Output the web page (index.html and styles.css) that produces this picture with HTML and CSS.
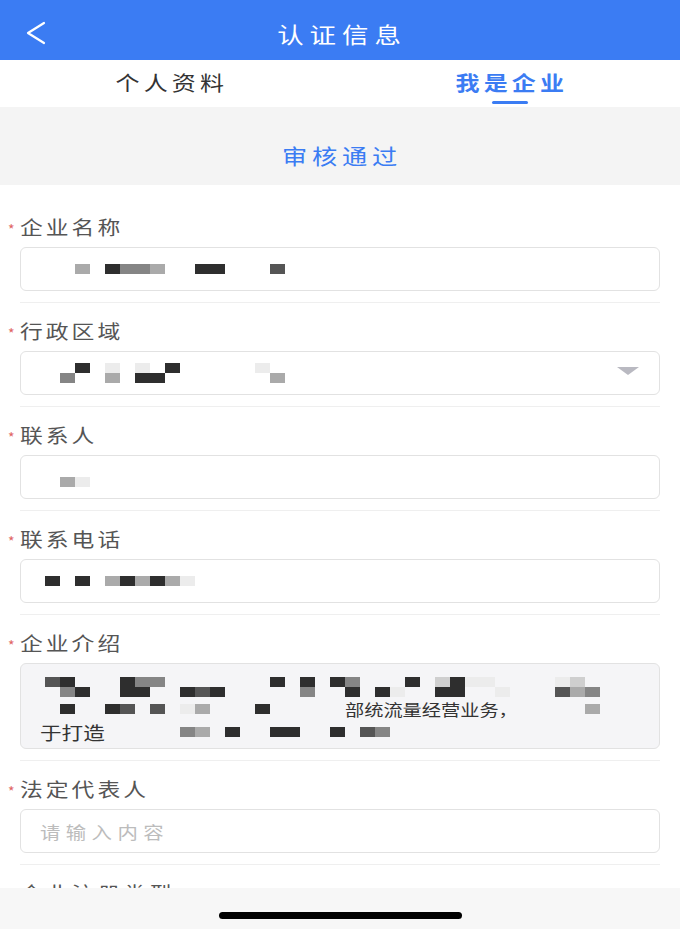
FILE: index.html
```html
<!DOCTYPE html>
<html lang="zh-CN">
<head>
    <meta charset="UTF-8">
    <meta name="viewport" content="width=device-width, initial-scale=1.0">
    <title>认证信息</title>
    <link rel="stylesheet" href="styles.css">
</head>
<body>
    <header class="nav-bar">
        <div class="nav-back">
            <svg width="22" height="24" viewBox="0 0 22 24"><polyline points="19,2 3,12 19,22" fill="none" stroke="#fff" stroke-width="2.2" stroke-linecap="round" stroke-linejoin="round"/></svg>
        </div>
        <div class="nav-title"><span class="wide">认证信息</span></div>
        <div></div>
    </header>

    <nav class="tabs">
        <div class="tab"><span class="wide">个人资料</span></div>
        <div class="tab active"><span class="wide">我是企业</span><span class="tab-line"></span></div>
    </nav>

    <div class="status"><span class="wide">审核通过</span></div>

    <form class="form">
        <div class="field">
            <div class="label"><span class="star">*</span><span class="wide">企业名称</span></div>
            <div class="input">
                <div class="mosaic"><i></i><i></i><i class="c3"></i><i></i><i class="c6"></i><i class="c4"></i><i class="c4"></i><i class="c3"></i><i></i><i></i><i class="c6"></i><i class="c6"></i><i></i><i></i><i></i><i class="c5"></i></div>
            </div>
        </div>

        <div class="field">
            <div class="label"><span class="star">*</span><span class="wide">行政区域</span></div>
            <div class="input select">
                <div>
                    <div class="mosaic"><i></i><i></i><i class="c6"></i><i></i><i class="c1"></i><i></i><i class="c1"></i><i></i><i class="c6"></i><i></i><i></i><i></i><i></i><i></i><i class="c1"></i></div>
                    <div class="mosaic"><i></i><i class="c4"></i><i></i><i></i><i class="c3"></i><i></i><i class="c6"></i><i class="c6"></i><i></i><i></i><i></i><i></i><i></i><i></i><i></i><i class="c3"></i></div>
                </div>
                <span class="caret"></span>
            </div>
        </div>

        <div class="field">
            <div class="label"><span class="star">*</span><span class="wide">联系人</span></div>
            <div class="input">
                <div class="mosaic low"><i></i><i class="c3"></i><i class="c1"></i></div>
            </div>
        </div>

        <div class="field">
            <div class="label"><span class="star">*</span><span class="wide">联系电话</span></div>
            <div class="input">
                <div class="mosaic"><i class="c6"></i><i></i><i class="c6"></i><i></i><i class="c3"></i><i class="c6"></i><i class="c3"></i><i class="c6"></i><i class="c3"></i><i class="c1"></i></div>
            </div>
        </div>

        <div class="field">
            <div class="label"><span class="star">*</span><span class="wide">企业介绍</span></div>
            <div class="textarea">
                <div class="mosaic"><i class="c5"></i><i class="c6"></i><i></i><i></i><i></i><i class="c6"></i><i class="c4"></i><i class="c4"></i><i></i><i></i><i></i><i></i><i></i><i></i><i></i><i class="c6"></i><i></i><i class="c6"></i><i></i><i class="c6"></i><i class="c4"></i><i></i><i></i><i></i><i class="c6"></i><i></i><i class="c2"></i><i class="c6"></i><i class="c1"></i><i class="c1"></i><i></i><i></i><i></i><i></i><i class="c1"></i><i class="c2"></i></div>
                <div class="mosaic"><i></i><i class="c4"></i><i class="c6"></i><i></i><i></i><i class="c6"></i><i class="c6"></i><i></i><i></i><i class="c6"></i><i class="c5"></i><i class="c6"></i><i></i><i></i><i></i><i></i><i></i><i class="c4"></i><i></i><i></i><i class="c6"></i><i></i><i class="c6"></i><i class="c1"></i><i></i><i></i><i class="c6"></i><i class="c6"></i><i></i><i></i><i class="c1"></i><i></i><i></i><i></i><i class="c5"></i><i class="c3"></i><i class="c4"></i></div>
                <div class="mosaic mid"><i></i><i class="c6"></i><i></i><i></i><i class="c6"></i><i class="c5"></i><i></i><i class="c5"></i><i></i><i class="c1"></i><i class="c3"></i><i></i><i></i><i></i><i class="c6"></i><i></i><i></i><i></i><i></i><i></i><span class="mid-text"><span class="wide">部统流量经营业务，</span></span><i></i><i></i><i class="c3"></i></div>
                <div class="text-row"><span class="intro-text"><span class="wide">于打造</span></span><i></i><i></i><i></i><i class="c4"></i><i class="c3"></i><i></i><i class="c6"></i><i></i><i></i><i class="c6"></i><i class="c6"></i><i></i><i></i><i class="c6"></i><i></i><i class="c5"></i><i class="c4"></i></div>
            </div>
        </div>

        <div class="field">
            <div class="label"><span class="star">*</span><span class="wide">法定代表人</span></div>
            <div class="input">
                <span class="placeholder"><span class="wide">请输入内容</span></span>
            </div>
        </div>

        <div class="field">
            <div class="label"><span class="star">*</span><span class="wide">企业注册类型</span></div>
            <div class="input"></div>
        </div>
    </form>

    <div class="home-bar">
        <span class="home-indicator"></span>
    </div>
</body>
</html>
```

FILE: styles.css
```css
body {
    margin: 0;
    font-family: "Noto Sans CJK SC", "Noto Sans", sans-serif;
    background-color: #fff;
    color: #333;
}
/* the screenshot is a little stretched sideways, so the glyphs are too */
.wide {
    display: inline-block;
    transform: scaleX(1.2);
    transform-origin: left center;
    white-space: nowrap;
}
.nav-bar {
    display: grid;
    grid-template-columns: 60px 1fr 60px;
    align-items: center;
    height: 60px;
    background-color: #3b7cf3;
}
.nav-back {
    display: flex;
    padding: 5px 0 0 25px;
}
.nav-title,
.tab,
.status {
    text-align: center;
}
.nav-title .wide,
.tab .wide,
.status .wide {
    transform-origin: center;
}
.nav-title {
    color: #fff;
    font-size: 22px;
    line-height: 28px;
    letter-spacing: 5px;
    padding: 6px 0 0 5px;
}
.tabs {
    display: flex;
    height: 47px;
}
.tab {
    flex: 1;
    display: flex;
    flex-direction: column;
    align-items: center;
    padding-top: 10px;
    font-size: 20px;
    line-height: 26px;
    letter-spacing: 3.5px;
    text-indent: 3.5px;
    color: #333;
}
.tab.active {
    color: #3b7cf3;
    font-weight: bold;
}
.tab-line {
    display: block;
    width: 36px;
    height: 3px;
    margin-top: 5px;
    border-radius: 2px;
    background-color: #3b7cf3;
}
.status {
    height: 78px;
    box-sizing: border-box;
    padding: 34px 0 0 4px;
    background-color: #f4f4f4;
    color: #3b7cf3;
    font-size: 21px;
    line-height: 28px;
    letter-spacing: 4px;
}
.form {
    padding-top: 14px;
}
.field {
    margin: 0 20px;
    padding: 13px 0 11px;
    border-bottom: 1px solid #efefef;
}
.label {
    display: flex;
    align-items: center;
    height: 28px;
    margin-bottom: 7px;
    font-size: 19px;
    letter-spacing: 2.5px;
    color: #555;
}
.star {
    width: 16px;
    margin-left: -16px;
    padding: 6px 0 0 4px;
    box-sizing: border-box;
    font-size: 14px;
    letter-spacing: 0;
    color: #e06464;
}
.input {
    display: flex;
    align-items: center;
    height: 44px;
    box-sizing: border-box;
    padding: 0 20px 0 24px;
    border: 1px solid #e2e2e2;
    border-radius: 6px;
    background-color: #fff;
}
.select {
    justify-content: space-between;
}
.caret {
    width: 0;
    height: 0;
    border-left: 11px solid transparent;
    border-right: 11px solid transparent;
    border-top: 8px solid #b9b9c1;
    margin-bottom: 4px;
}
.placeholder {
    margin-left: -5px;
    font-size: 17px;
    letter-spacing: 4.5px;
    color: #bcbcbc;
}
.mosaic,
.text-row {
    display: flex;
}
.mosaic i,
.text-row i {
    display: block;
    flex: none;
    width: 15px;
    height: 10px;
}
.mosaic.low {
    margin-top: 10px;
}
.mosaic .c1, .text-row .c1 { background-color: #ececec; }
.mosaic .c2, .text-row .c2 { background-color: #cfcfcf; }
.mosaic .c3, .text-row .c3 { background-color: #aaa; }
.mosaic .c4, .text-row .c4 { background-color: #858585; }
.mosaic .c5, .text-row .c5 { background-color: #555; }
.mosaic .c6, .text-row .c6 { background-color: #2e2e2e; }
.textarea {
    height: 86px;
    box-sizing: border-box;
    padding: 13px 10px 0 19px;
    border: 1px solid #e2e2e2;
    border-radius: 6px;
    background-color: #f5f5f7;
}
.textarea .mosaic {
    padding-left: 5px;
}
.mosaic.mid {
    align-items: center;
    height: 20px;
    margin-top: 2px;
}
.mid-text {
    width: 210px;
    flex: none;
    font-size: 16px;
    line-height: 20px;
    color: #333;
}
.text-row {
    align-items: center;
    height: 24px;
    margin-top: 1px;
}
.intro-text {
    width: 95px;
    flex: none;
    font-size: 18px;
    color: #333;
}
.home-bar {
    position: fixed;
    left: 0;
    right: 0;
    bottom: 0;
    height: 41px;
    display: flex;
    justify-content: center;
    background-color: #f7f7f7;
}
.home-indicator {
    width: 243px;
    height: 7px;
    margin-top: 24px;
    border-radius: 4px;
    background-color: #000;
}
```
